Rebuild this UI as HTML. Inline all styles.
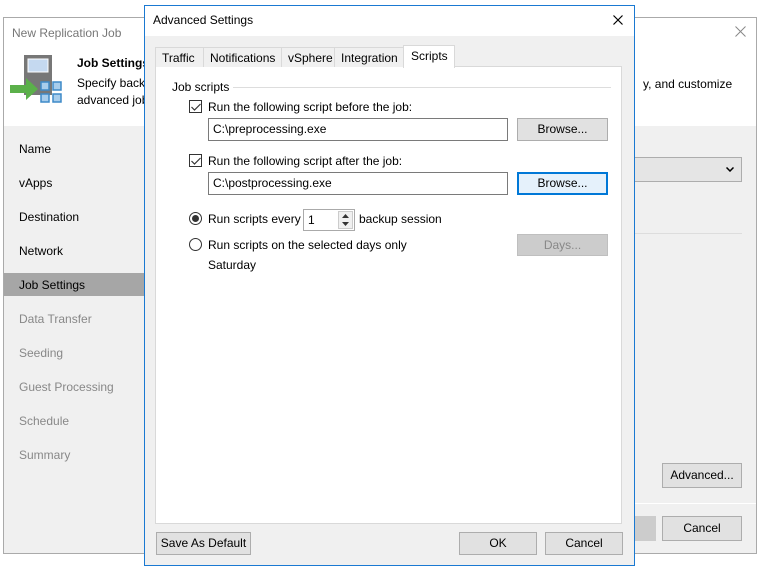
<!DOCTYPE html>
<html><head><style>
*{box-sizing:border-box;margin:0;padding:0}
body{width:762px;height:570px;background:#fff;font-family:"Liberation Sans",sans-serif;font-size:12px;color:#000;position:relative;overflow:hidden}
.a{position:absolute}
.btn{position:absolute;background:#e1e1e1;border:1px solid #adadad;text-align:center;line-height:21px;font-size:12px}
.nav{position:absolute;left:19px;font-size:12px}
.inp{position:absolute;background:#fff;border:1px solid #7a7a7a;padding-left:4px;line-height:20px}
.cb{position:absolute;width:13px;height:13px;border:1px solid #333;background:#fff}
.rb{position:absolute;width:13px;height:13px;border:1px solid #333;border-radius:50%;background:#fff}
</style></head><body>
<div class="a" style="left:3px;top:17px;width:754px;height:537px;border:1px solid #aaa;background:#f0f0f0"></div>
<div class="a" style="left:4px;top:18px;width:752px;height:108px;background:#fff"></div>
<div class="a" style="left:12px;top:26px;color:#777;font-size:12px">New Replication Job</div>
<svg class="a" style="left:735px;top:26px" width="11" height="11"><path d="M0.5 0.5L10.5 10.5M10.5 0.5L0.5 10.5" stroke="#888" stroke-width="1"/></svg>
<svg class="a" style="left:8px;top:52px" width="60" height="56">
<rect x="16" y="3" width="28" height="40" fill="#777"/><rect x="20" y="7" width="20" height="13" fill="#c5d9f0" stroke="#fff"/>
<path d="M2 33h16v-7l12 11-12 11v-7H2z" fill="#5bb04a"/>
<g fill="#a8cdec" stroke="#3e8ac8" stroke-width="1.5"><rect x="33" y="30" width="8" height="8"/><rect x="45" y="30" width="8" height="8"/><rect x="33" y="42" width="8" height="8"/><rect x="45" y="42" width="8" height="8"/></g>
</svg>
<div class="a" style="left:77px;top:56px;font-weight:bold">Job Settings</div>
<div class="a" style="left:77px;top:76px">Specify backup</div>
<div class="a" style="left:77px;top:93px">advanced job</div>
<div class="a" style="left:643px;top:77px">y, and customize</div>
<div class="nav" style="top:142px">Name</div>
<div class="nav" style="top:176px">vApps</div>
<div class="nav" style="top:210px">Destination</div>
<div class="nav" style="top:244px">Network</div>
<div class="a" style="left:4px;top:273px;width:141px;height:23px;background:#a6a6a6"></div>
<div class="nav" style="top:278px">Job Settings</div>
<div class="nav" style="top:312px;color:#888">Data Transfer</div>
<div class="nav" style="top:346px;color:#888">Seeding</div>
<div class="nav" style="top:380px;color:#888">Guest Processing</div>
<div class="nav" style="top:414px;color:#888">Schedule</div>
<div class="nav" style="top:448px;color:#888">Summary</div>
<div class="a" style="left:630px;top:157px;width:112px;height:25px;background:#e5e5e5;border:1px solid #adadad"></div>
<svg class="a" style="left:726px;top:167px" width="8" height="5"><path d="M0.5 0.5L4 4L7.5 0.5" stroke="#000" stroke-width="1.5" fill="none"/></svg>
<div class="a" style="left:630px;top:233px;width:112px;height:1px;background:#ddd"></div>
<div class="btn" style="left:662px;top:463px;width:80px;height:25px;line-height:23px">Advanced...</div>
<div class="a" style="left:634px;top:503px;width:122px;height:1px;background:#fff"></div>
<div class="btn" style="left:630px;top:516px;width:26px;height:25px;background:#ccc;border-color:#ccc"></div>
<div class="btn" style="left:662px;top:516px;width:80px;height:25px;line-height:23px">Cancel</div>
<div class="a" style="left:144px;top:5px;width:491px;height:561px;border:1px solid #1a79d2;background:#f0f0f0"></div>
<div class="a" style="left:145px;top:6px;width:489px;height:30px;background:#fff"></div>
<div class="a" style="left:153px;top:13px">Advanced Settings</div>
<svg class="a" style="left:613px;top:15px" width="10" height="10"><path d="M0.5 0.5L9.5 9.5M9.5 0.5L0.5 9.5" stroke="#000" stroke-width="1.2"/></svg>
<div class="a" style="left:155px;top:66px;width:467px;height:458px;background:#fff;border:1px solid #d9d9d9"></div>
<div class="a" style="left:155px;top:47px;width:49px;height:20px;border:1px solid #d9d9d9;border-bottom:none;padding:3px 0 0 6px;background:#f0f0f0">Traffic</div>
<div class="a" style="left:203px;top:47px;width:79px;height:20px;border:1px solid #d9d9d9;border-bottom:none;padding:3px 0 0 6px;background:#f0f0f0">Notifications</div>
<div class="a" style="left:281px;top:47px;width:54px;height:20px;border:1px solid #d9d9d9;border-bottom:none;padding:3px 0 0 6px;background:#f0f0f0">vSphere</div>
<div class="a" style="left:334px;top:47px;width:70px;height:20px;border:1px solid #d9d9d9;border-bottom:none;padding:3px 0 0 6px;background:#f0f0f0">Integration</div>
<div class="a" style="left:403px;top:45px;width:52px;height:23px;border:1px solid #d9d9d9;border-bottom:none;padding:3px 0 0 7px;background:#fff">Scripts</div>
<div class="a" style="left:172px;top:80px">Job scripts</div>
<div class="a" style="left:233px;top:87px;width:378px;height:1px;background:#ddd"></div>
<div class="cb" style="left:189px;top:100px"></div>
<svg class="a" style="left:191px;top:103px" width="10" height="8"><path d="M0.5 4L3.5 7L9.5 1" stroke="#333" stroke-width="1.2" fill="none"/></svg>
<div class="a" style="left:208px;top:100px">Run the following script before the job:</div>
<div class="inp" style="left:208px;top:118px;width:300px;height:23px">C:\preprocessing.exe</div>
<div class="btn" style="left:517px;top:118px;width:91px;height:23px">Browse...</div>
<div class="cb" style="left:189px;top:154px"></div>
<svg class="a" style="left:191px;top:157px" width="10" height="8"><path d="M0.5 4L3.5 7L9.5 1" stroke="#333" stroke-width="1.2" fill="none"/></svg>
<div class="a" style="left:208px;top:154px">Run the following script after the job:</div>
<div class="inp" style="left:208px;top:172px;width:300px;height:23px">C:\postprocessing.exe</div>
<div class="btn" style="left:517px;top:172px;width:91px;height:23px;border:2px solid #0078d7;background:#e5f1fb;line-height:19px">Browse...</div>
<div class="rb" style="left:189px;top:212px"></div><div class="a" style="left:192px;top:215px;width:7px;height:7px;border-radius:50%;background:#333"></div>
<div class="a" style="left:208px;top:212px">Run scripts every</div>
<div class="inp" style="left:303px;top:209px;width:52px;height:22px;border-color:#aaa">1</div>
<div class="a" style="left:338px;top:211px;width:15px;height:18px;background:#f0f0f0;border:1px solid #ccc"></div>
<svg class="a" style="left:342px;top:213px" width="7" height="14"><path d="M0 5L3.5 1L7 5z M0 9L3.5 13L7 9z" fill="#333"/></svg>
<div class="a" style="left:359px;top:212px">backup session</div>
<div class="rb" style="left:189px;top:238px"></div>
<div class="a" style="left:208px;top:238px">Run scripts on the selected days only</div>
<div class="a" style="left:208px;top:258px">Saturday</div>
<div class="btn" style="left:517px;top:234px;width:91px;height:22px;background:#ccc;border-color:#bfbfbf;color:#888">Days...</div>
<div class="btn" style="left:156px;top:532px;width:95px;height:23px">Save As Default</div>
<div class="btn" style="left:459px;top:532px;width:78px;height:23px">OK</div>
<div class="btn" style="left:545px;top:532px;width:78px;height:23px">Cancel</div>
</body></html>
